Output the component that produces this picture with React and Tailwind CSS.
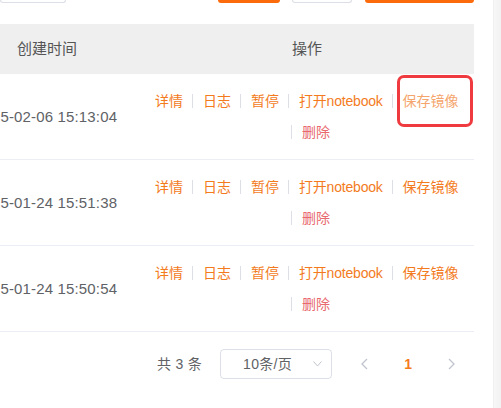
import React from "react";

const rows = [
  { date: "2025-02-06 15:13:04", hover: true },
  { date: "2025-01-24 15:51:38" },
  { date: "2025-01-24 15:50:54" },
];

function Sep() {
  return <span className="inline-block w-px h-[14px] bg-[#dcdfe6] ml-[9px] mr-[10px]" />;
}

function Chevron({ dir }) {
  return (
    <svg width="10" height="12" viewBox="0 0 10 12" fill="none" stroke="#c0c4cc" strokeWidth="1.3">
      {dir === "left" ? <polyline points="7,1 2,6 7,11" /> : <polyline points="3,1 8,6 3,11" />}
    </svg>
  );
}

export default function App() {
  return (
    <div
      className="relative w-[501px] h-[408px] overflow-hidden bg-white flex"
      style={{ fontFamily: '"Liberation Sans", "Noto Sans CJK SC", sans-serif' }}
    >
      <div className="w-[474px] flex flex-col shrink-0">
        {/* top toolbar (cut off) */}
        <div className="h-[24px] flex items-start">
          <div className="w-[66px] h-[3px] border-x border-b border-[#dcdfe6] rounded-b-[3px]" />
          <div className="ml-[152px] w-[62px] h-[3px] bg-[#fb6b0c] rounded-b-[3px]" />
          <div className="ml-[12px] w-[61px] h-[3px] border-x border-b border-[#dcdfe6] rounded-b-[3px]" />
          <div className="ml-[13px] w-[109px] h-[3px] bg-[#fb6b0c] rounded-b-[3px]" />
        </div>

        {/* header */}
        <div className="h-[50px] bg-[#efefef] flex items-center text-[15px] text-[#555]">
          <div className="w-[140px] pl-[17px]">创建时间</div>
          <div className="flex-1 text-center">操作</div>
        </div>

        {/* rows */}
        {rows.map((r, i) => (
          <div key={i} className="h-[86px] border-b border-[#ebeef5] flex items-center">
            <div className="w-[140px] overflow-hidden pt-[2px]">
              <div className="whitespace-nowrap -ml-[25px] text-[15px] tracking-[0.15px] text-[#606266]">{r.date}</div>
            </div>
            <div className="flex-1 flex flex-col gap-[11px] text-[14px]">
              <div className="h-[20px] flex items-center pl-[15px] whitespace-nowrap text-[#f37b1d]">
                <span>详情</span>
                <Sep />
                <span>日志</span>
                <Sep />
                <span>暂停</span>
                <Sep />
                <span className="tracking-[-0.2px]">打开notebook</span>
                <Sep />
                <span className={r.hover ? "text-[#f5a56c]" : ""}>保存镜像</span>
              </div>
              <div className="h-[20px] flex items-center pl-[151px] whitespace-nowrap">
                <span className="inline-block w-px h-[14px] bg-[#dcdfe6] mr-[10px]" />
                <span className="text-[#e8686e]">删除</span>
              </div>
            </div>
          </div>
        ))}

        {/* pagination */}
        <div className="flex items-center mt-[17px] h-[30px] text-[14px] text-[#606266]">
          <span className="pl-[157px] whitespace-nowrap tracking-[0.3px]">共 3 条</span>
          <div className="ml-[18px] w-[112px] h-[30px] border border-[#dcdfe6] rounded-[4px] flex items-center justify-between pl-[22px] pr-[9px]">
            <span className="tracking-[0.3px]">10条/页</span>
            <svg width="9" height="6" viewBox="0 0 9 6" fill="none" stroke="#c0c4cc" strokeWidth="1">
              <polyline points="0.5,0.5 4.5,5 8.5,0.5" />
            </svg>
          </div>
          <div className="ml-[18px] w-[30px] flex justify-center">
            <Chevron dir="left" />
          </div>
          <div className="ml-[14px] w-[28px] text-center font-bold text-[#f37b1d]">1</div>
          <div className="ml-[14px] w-[30px] flex justify-center">
            <Chevron dir="right" />
          </div>
        </div>
      </div>

      <div className="flex-1" />
      <div className="w-[8px] h-full bg-gradient-to-r from-[#f7f7f7] to-[#f2f2f2] border-l border-[#f0f0f0]" />

      {/* annotation highlight */}
      <div className="absolute left-[397px] top-[75px] w-[76px] h-[52px] border-[3px] border-[#ef3b3f] rounded-[7px]" />
    </div>
  );
}
